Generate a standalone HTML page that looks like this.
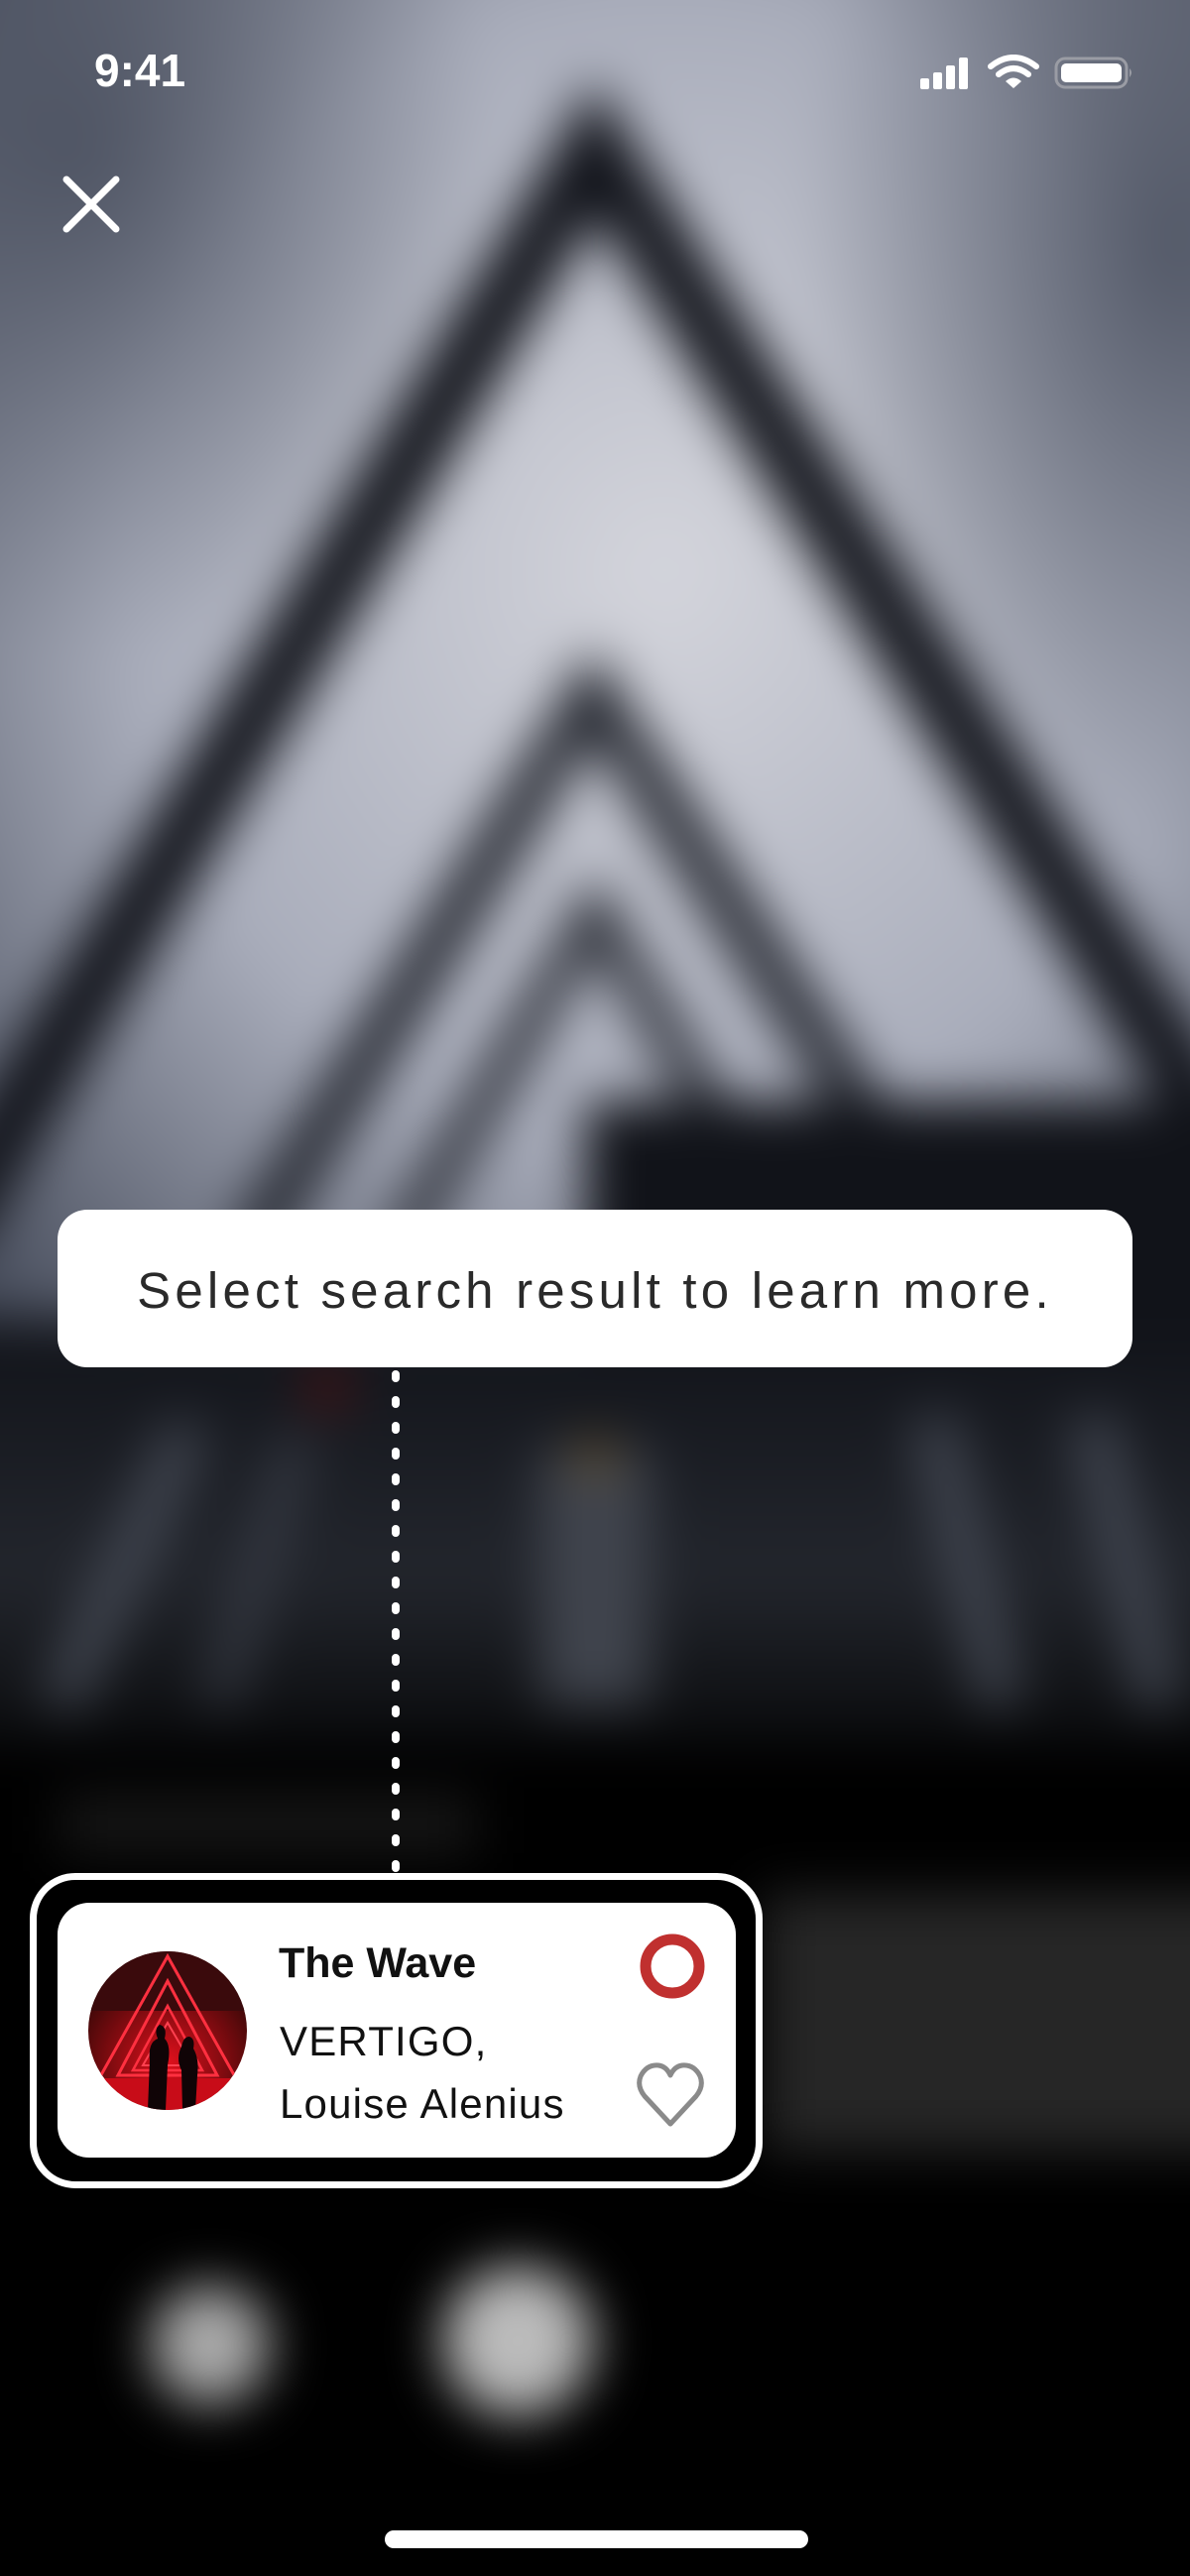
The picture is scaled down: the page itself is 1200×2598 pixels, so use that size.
<!DOCTYPE html>
<html style="overflow:hidden"><head><meta charset="utf-8">
<style>
html,body{margin:0;padding:0;background:#000;width:1200px;height:2598px;overflow:hidden;}
body{font-family:"Liberation Sans",sans-serif;}
#w{position:relative;width:1200px;height:2598px;overflow:hidden;}
.abs{position:absolute;}
</style></head><body><div id="w">
<div class="abs" style="left:-100px;top:-100px;width:1400px;height:2798px;filter:blur(26px);">
<svg width="1400" height="2798" viewBox="-100 -100 1400 2798" style="display:block">
<defs>
<radialGradient id="sky" cx="0.55" cy="0.45" r="0.7">
<stop offset="0" stop-color="#d4d5dc"/><stop offset="0.55" stop-color="#a9adbb"/><stop offset="1" stop-color="#454b5a"/>
</radialGradient>
<radialGradient id="tl" cx="0.5" cy="0.5" r="0.5"><stop offset="0" stop-color="#454b5a" stop-opacity="0.85"/><stop offset="1" stop-color="#454b5a" stop-opacity="0"/></radialGradient>
<linearGradient id="road" x1="0" y1="0" x2="0" y2="1">
<stop offset="0" stop-color="#111319"/><stop offset="0.6" stop-color="#23262d"/><stop offset="1" stop-color="#0a0b0d"/>
</linearGradient>
</defs>
<rect x="-100" y="-100" width="1400" height="1500" fill="url(#sky)"/>
<ellipse cx="80" cy="150" rx="420" ry="520" fill="url(#tl)"/>
<ellipse cx="1180" cy="250" rx="380" ry="620" fill="url(#tl)"/>
<rect x="-100" y="1330" width="1400" height="430" fill="url(#road)"/>
<path d="M-60 1250 L600 150 L1260 1190" fill="none" stroke="#12141b" stroke-width="70"/>
<path d="M250 1260 L597 700 L960 1260" fill="none" stroke="#22252d" stroke-width="48"/>
<path d="M400 1260 L600 920 L800 1260" fill="none" stroke="#2b2e36" stroke-width="38"/>
<rect x="590" y="1110" width="700" height="240" fill="#111319"/>
<path d="M60 1720 L190 1440" stroke="#454a55" stroke-width="40"/>
<path d="M220 1720 L300 1450" stroke="#3a3e48" stroke-width="30"/>
<path d="M600 1720 L600 1460" stroke="#40444d" stroke-width="110"/>
<path d="M1010 1720 L940 1430" stroke="#454a55" stroke-width="40"/>
<path d="M1170 1720 L1100 1430" stroke="#454a55" stroke-width="40"/>
<circle cx="330" cy="1400" r="20" fill="#5a1010"/>
<circle cx="600" cy="1470" r="18" fill="#6a5020"/>
<rect x="-200" y="1760" width="1600" height="1100" fill="#000"/>
<rect x="60" y="1810" width="420" height="60" fill="#161616"/>
<rect x="770" y="1910" width="600" height="260" fill="#262626"/>
<circle cx="212" cy="2365" r="60" fill="#aaa"/>
<circle cx="522" cy="2361" r="76" fill="#bbb"/>
</svg>
</div>
<svg class="abs" style="left:0;top:0" width="1200" height="2598">
<line x1="399" y1="1386" x2="399" y2="1889" stroke="#fff" stroke-width="8" stroke-linecap="round" stroke-dasharray="4 22"/>
</svg>

<div class="abs" style="left:95px;top:44px;font-size:46px;font-weight:bold;color:#fff;">9:41</div>
<svg class="abs" style="left:925px;top:55px" width="220" height="40" viewBox="0 0 220 40">
<rect x="3" y="24" width="9" height="11" rx="2" fill="#fff"/>
<rect x="16" y="18" width="9" height="17" rx="2" fill="#fff"/>
<rect x="29" y="11" width="9" height="24" rx="2" fill="#fff"/>
<rect x="42" y="3" width="9" height="32" rx="2" fill="#fff"/>
<path d="M74 12 Q97 -6 120 12" fill="none" stroke="#fff" stroke-width="6" stroke-linecap="round"/>
<path d="M82 20 Q97 8 112 20" fill="none" stroke="#fff" stroke-width="6" stroke-linecap="round"/>
<path d="M89 27 L97 34 L105 27 Q97 20 89 27Z" fill="#fff"/>
<rect x="140" y="4" width="71" height="29" rx="9" fill="none" stroke="#9a9ca4" stroke-width="3"/>
<rect x="145" y="9" width="61" height="19" rx="5" fill="#fff"/>
<path d="M214 14 Q218 18 214 23Z" fill="#9a9ca4"/>
</svg>
<svg class="abs" style="left:62px;top:176px" width="60" height="60" viewBox="0 0 60 60">
<path d="M5 5 L55 55 M55 5 L5 55" stroke="#fff" stroke-width="7" stroke-linecap="round"/>
</svg>

<div class="abs" style="left:58px;top:1220px;width:1084px;height:159px;background:#fff;border-radius:30px;"></div>
<div class="abs" style="left:58px;top:1220px;width:1084px;height:159px;line-height:164px;text-align:center;font-size:51px;letter-spacing:4.2px;color:#2a2a2a;white-space:nowrap;">Select search result to learn more.</div>

<div class="abs" style="left:30px;top:1889px;width:739px;height:318px;box-sizing:border-box;border:7px solid #fff;border-radius:46px;background:#000;"></div>
<div class="abs" style="left:58px;top:1919px;width:684px;height:257px;background:#fff;border-radius:32px;"></div>
<svg class="abs" style="left:89px;top:1968px" width="160" height="160" viewBox="0 0 160 160">
<defs><clipPath id="c"><circle cx="80" cy="80" r="80"/></clipPath>
<radialGradient id="rg" cx="0.5" cy="0.7" r="0.6"><stop offset="0" stop-color="#e0101c"/><stop offset="1" stop-color="#400808"/></radialGradient></defs>
<g clip-path="url(#c)">
<rect width="160" height="160" fill="url(#rg)"/>
<rect y="0" width="160" height="60" fill="#3a0a0c"/>
<path d="M10 130 L80 5 L150 130Z" fill="none" stroke="#ff3040" stroke-width="3"/>
<path d="M30 125 L80 30 L130 125Z" fill="none" stroke="#ff3040" stroke-width="3"/>
<path d="M45 120 L80 55 L115 120Z" fill="none" stroke="#ff3040" stroke-width="2.5"/>
<path d="M55 115 L80 72 L105 115Z" fill="none" stroke="#ff4050" stroke-width="2"/>
<rect y="128" width="160" height="32" fill="#c80c18"/>
<path d="M60 160 L62 110 Q60 92 70 88 Q66 78 72 74 Q80 76 77 88 Q84 95 80 115 L78 160Z" fill="#100406"/>
<path d="M95 160 L94 120 Q88 108 94 96 Q96 86 102 86 Q108 88 106 98 Q112 108 110 125 L108 160Z" fill="#100406"/>
</g></svg>
<div class="abs" style="left:281px;top:1956px;font-size:43px;font-weight:bold;color:#111;">The Wave</div>
<div class="abs" style="left:282px;top:2035px;font-size:42px;color:#111;letter-spacing:1.2px;">VERTIGO,</div>
<div class="abs" style="left:282px;top:2098px;font-size:42px;color:#111;letter-spacing:1.2px;">Louise Alenius</div>
<svg class="abs" style="left:642px;top:1947px" width="72" height="72" viewBox="0 0 72 72">
<circle cx="36" cy="36" r="27" fill="none" stroke="#c0302f" stroke-width="11"/>
</svg>
<svg class="abs" style="left:640px;top:2078px" width="72" height="70" viewBox="0 0 72 70">
<path d="M36 64 L10 36 Q2 26 6 16 Q12 4 24 5 Q32 6 36 15 Q40 6 48 5 Q60 4 66 16 Q70 26 62 36Z" fill="none" stroke="#8a8a8a" stroke-width="5" stroke-linejoin="round"/>
</svg>

<div class="abs" style="left:388px;top:2552px;width:427px;height:18px;background:#fff;border-radius:9px;"></div>
</div></body></html>
